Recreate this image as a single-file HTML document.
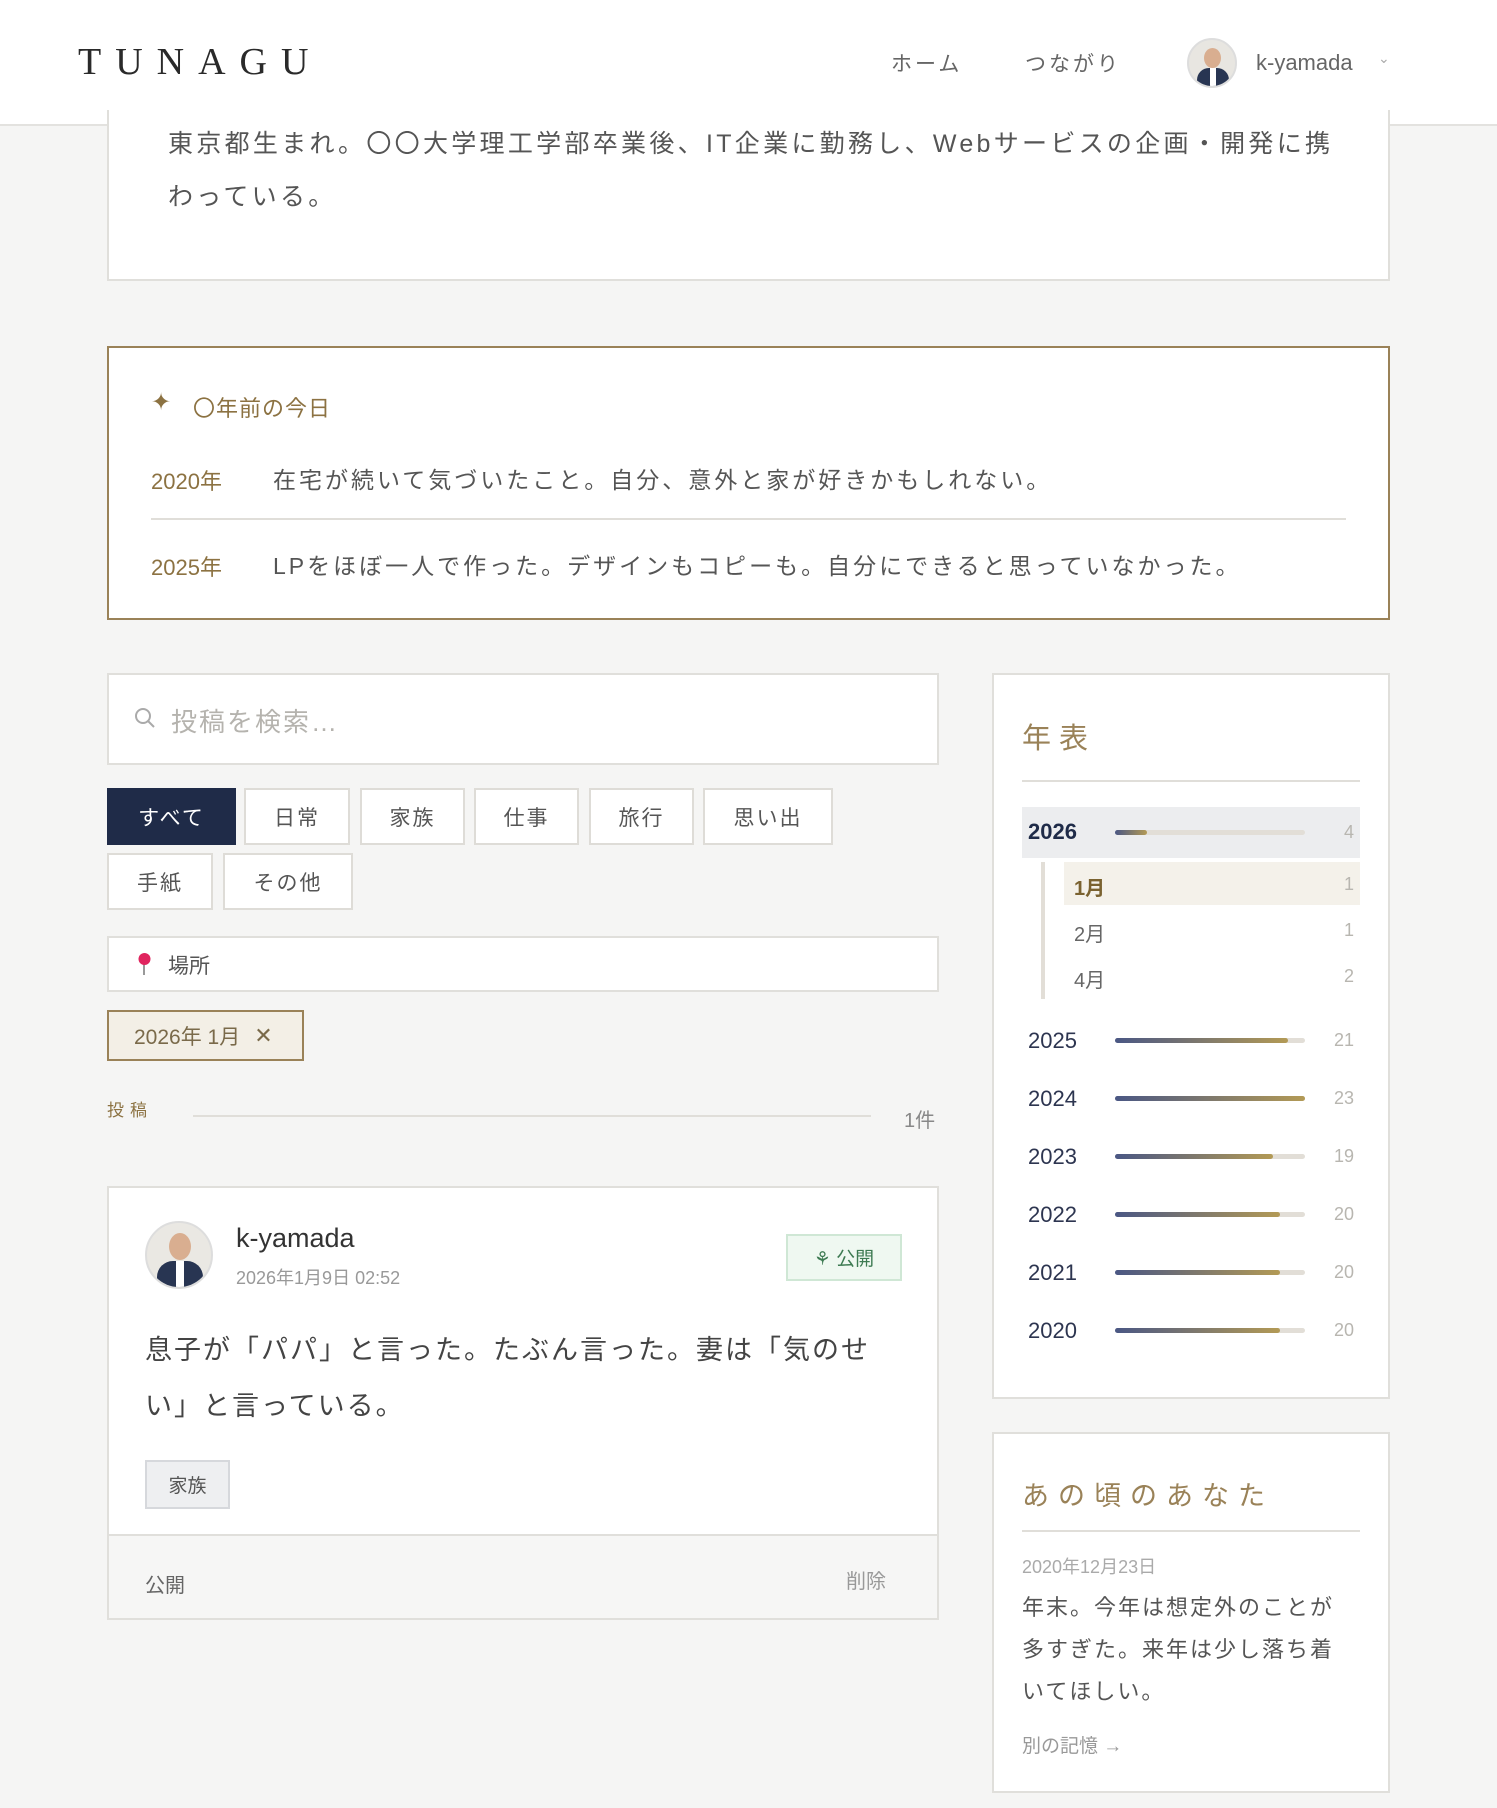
<!DOCTYPE html>
<html><head><meta charset="utf-8"><style>
*{box-sizing:border-box;margin:0;padding:0}
body{width:1497px;height:1808px;background:#f5f5f4;font-family:"Liberation Sans","Noto Sans CJK JP",sans-serif;color:#4a4a4a;position:relative;overflow:hidden}
.a{position:absolute}
.card{position:absolute;background:#fff;border:2px solid #e0dfdb}
.btn{position:absolute;background:#fff;border:2px solid #dedcd7;font-size:21px;color:#555;display:flex;align-items:center;justify-content:center;letter-spacing:2px}
.yr{position:absolute;left:1028px;font-size:22px;color:#2d3550}
.bar{position:absolute;left:1115px;width:190px;height:5px;background:#e2ded7;border-radius:3px}
.bar i{display:block;height:5px;border-radius:3px;background:linear-gradient(90deg,#4a5784,#b39a55)}
.cnt{position:absolute;left:1334px;width:20px;text-align:right;font-size:18px;color:#b8b6b0}
</style></head><body>
<div class="a" style="left:0;top:0;width:1497px;height:126px;background:#fff;border-bottom:2px solid #e3e2df"></div>
<div class="a" style="left:78px;top:40px;font-family:'Liberation Serif',serif;font-size:38px;letter-spacing:14px;color:#2a2a2a">TUNAGU</div>
<div class="a" style="left:891px;top:48px;font-size:21px;color:#666;letter-spacing:3px">ホーム</div>
<div class="a" style="left:1025px;top:48px;font-size:21px;color:#666;letter-spacing:3px">つながり</div>
<div class="a" style="left:1187px;top:38px;width:50px;height:50px;border-radius:50%;background:#e8e6e1;border:2px solid #ddd;overflow:hidden">
<div class="a" style="left:15px;top:8px;width:17px;height:20px;border-radius:50%;background:#d9ae90"></div>
<div class="a" style="left:8px;top:28px;width:32px;height:22px;border-radius:12px 12px 0 0;background:#283552"></div>
<div class="a" style="left:21px;top:28px;width:6px;height:18px;background:#fff"></div></div>
<div class="a" style="left:1256px;top:50px;font-size:22px;color:#666">k-yamada</div>
<div class="a" style="left:1378px;top:50px;font-size:14px;color:#aaa">&#8964;</div>

<div class="card" style="left:107px;top:110px;width:1283px;height:171px;border-top:none"></div>
<div class="a" style="left:168px;top:118px;width:1215px;font-size:25px;line-height:53px;letter-spacing:3.3px;color:#555;white-space:nowrap">東京都生まれ。〇〇大学理工学部卒業後、IT企業に勤務し、Webサービスの企画・開発に携<br>わっている。</div>

<div class="a" style="left:107px;top:346px;width:1283px;height:274px;background:#fff;border:2px solid #9a8258"></div>
<div class="a" style="left:151px;top:388px;font-size:24px;color:#8c7242">✦</div>
<div class="a" style="left:193px;top:391px;font-size:22px;color:#8c7242;letter-spacing:1px">〇年前の今日</div>
<div class="a" style="left:151px;top:464px;font-size:22px;color:#8c7242">2020年</div>
<div class="a" style="left:273px;top:461px;font-size:23px;letter-spacing:3px;color:#555">在宅が続いて気づいたこと。自分、意外と家が好きかもしれない。</div>
<div class="a" style="left:151px;top:518px;width:1195px;height:2px;background:#e0ded9"></div>
<div class="a" style="left:151px;top:550px;font-size:22px;color:#8c7242">2025年</div>
<div class="a" style="left:273px;top:547px;font-size:23px;letter-spacing:3px;color:#555">LPをほぼ一人で作った。デザインもコピーも。自分にできると思っていなかった。</div>

<div class="card" style="left:107px;top:673px;width:832px;height:92px"></div>
<svg class="a" style="left:133px;top:706px" width="24" height="24" viewBox="0 0 24 24"><circle cx="10" cy="10" r="7" fill="none" stroke="#aaa" stroke-width="2"/><path d="M15 15l6 6" stroke="#aaa" stroke-width="2"/></svg>
<div class="a" style="left:171px;top:702px;font-size:26px;color:#b5b3ae;letter-spacing:2px">投稿を検索…</div>

<div class="btn" style="left:107px;top:788px;width:129px;height:57px;background:#1f2b48;border-color:#1f2b48;color:#fff">すべて</div>
<div class="btn" style="left:244px;top:788px;width:106px;height:57px">日常</div>
<div class="btn" style="left:360px;top:788px;width:105px;height:57px">家族</div>
<div class="btn" style="left:474px;top:788px;width:105px;height:57px">仕事</div>
<div class="btn" style="left:589px;top:788px;width:105px;height:57px">旅行</div>
<div class="btn" style="left:703px;top:788px;width:130px;height:57px">思い出</div>
<div class="btn" style="left:107px;top:853px;width:106px;height:57px">手紙</div>
<div class="btn" style="left:223px;top:853px;width:130px;height:57px">その他</div>

<div class="card" style="left:107px;top:936px;width:832px;height:56px"></div>
<svg class="a" style="left:137px;top:952px" width="16" height="24" viewBox="0 0 16 24"><path d="M7 12v11" stroke="#999" stroke-width="2"/><circle cx="7.5" cy="7" r="6" fill="#e0245e"/></svg>
<div class="a" style="left:168px;top:950px;font-size:21px;color:#555">場所</div>

<div class="a" style="left:107px;top:1010px;width:197px;height:51px;background:#f3efe6;border:2px solid #9a8258;font-size:21px;color:#7a6a4a;display:flex;align-items:center;padding-left:25px">2026年 1月 <span style="margin-left:14px;font-size:22px">✕</span></div>

<div class="a" style="left:107px;top:1096px;font-size:17px;color:#8c7242;letter-spacing:6px">投稿</div>
<div class="a" style="left:193px;top:1115px;width:678px;height:2px;background:#e0ded9"></div>
<div class="a" style="left:904px;top:1104px;font-size:20px;color:#888">1件</div>

<div class="card" style="left:107px;top:1186px;width:832px;height:434px"></div>
<div class="a" style="left:109px;top:1534px;width:828px;height:84px;background:#f6f6f5;border-top:2px solid #e0dfdb"></div>
<div class="a" style="left:145px;top:1221px;width:68px;height:68px;border-radius:50%;background:#eae8e3;border:2px solid #ddd;overflow:hidden">
<div class="a" style="left:22px;top:10px;width:22px;height:27px;border-radius:50%;background:#d9ae90"></div>
<div class="a" style="left:10px;top:38px;width:46px;height:30px;border-radius:16px 16px 0 0;background:#283552"></div>
<div class="a" style="left:29px;top:38px;width:8px;height:26px;background:#fff"></div></div>
<div class="a" style="left:236px;top:1223px;font-size:27px;color:#333">k-yamada</div>
<div class="a" style="left:236px;top:1264px;font-size:18px;color:#999">2026年1月9日 02:52</div>
<div class="a" style="left:786px;top:1234px;width:116px;height:47px;background:#eff8f1;border:2px solid #cfe7d5;color:#3d7a52;font-size:19px;display:flex;align-items:center;justify-content:center">⚘ 公開</div>
<div class="a" style="left:145px;top:1322px;width:740px;font-size:27px;line-height:56px;letter-spacing:2px;color:#444">息子が「パパ」と言った。たぶん言った。妻は「気のせい」と言っている。</div>
<div class="a" style="left:145px;top:1460px;width:85px;height:49px;background:#eeeff1;border:2px solid #d6d8dc;font-size:19px;color:#555;display:flex;align-items:center;justify-content:center">家族</div>
<div class="a" style="left:145px;top:1569px;font-size:20px;color:#666">公開</div>
<div class="a" style="left:846px;top:1565px;font-size:20px;color:#999">削除</div>

<div class="card" style="left:992px;top:673px;width:398px;height:726px"></div>
<div class="a" style="left:1022px;top:715px;font-size:29px;color:#9a8258;letter-spacing:8px">年表</div>
<div class="a" style="left:1022px;top:780px;width:338px;height:2px;background:#e0ded9"></div>
<div class="a" style="left:1022px;top:807px;width:338px;height:51px;background:#ecedef"></div>
<div class="yr" style="top:819px;font-weight:bold;color:#1f2b48">2026</div>
<div class="bar" style="top:830px"><i style="width:17%"></i></div>
<div class="cnt" style="top:822px">4</div>
<div class="a" style="left:1041px;top:862px;width:4px;height:137px;background:#e2ded7"></div>
<div class="a" style="left:1064px;top:862px;width:296px;height:43px;background:#f4f1ea"></div>
<div class="a" style="left:1074px;top:872px;font-size:20px;color:#7a6230;font-weight:bold">1月</div>
<div class="cnt" style="top:874px">1</div>
<div class="a" style="left:1074px;top:918px;font-size:20px;color:#666">2月</div>
<div class="cnt" style="top:920px">1</div>
<div class="a" style="left:1074px;top:964px;font-size:20px;color:#666">4月</div>
<div class="cnt" style="top:966px">2</div>
<div class="yr" style="top:1028px">2025</div><div class="bar" style="top:1038px"><i style="width:91%"></i></div><div class="cnt" style="top:1030px">21</div>
<div class="yr" style="top:1086px">2024</div><div class="bar" style="top:1096px"><i style="width:100%"></i></div><div class="cnt" style="top:1088px">23</div>
<div class="yr" style="top:1144px">2023</div><div class="bar" style="top:1154px"><i style="width:83%"></i></div><div class="cnt" style="top:1146px">19</div>
<div class="yr" style="top:1202px">2022</div><div class="bar" style="top:1212px"><i style="width:87%"></i></div><div class="cnt" style="top:1204px">20</div>
<div class="yr" style="top:1260px">2021</div><div class="bar" style="top:1270px"><i style="width:87%"></i></div><div class="cnt" style="top:1262px">20</div>
<div class="yr" style="top:1318px">2020</div><div class="bar" style="top:1328px"><i style="width:87%"></i></div><div class="cnt" style="top:1320px">20</div>

<div class="card" style="left:992px;top:1432px;width:398px;height:361px"></div>
<div class="a" style="left:1022px;top:1474px;font-size:27px;color:#9a8258;letter-spacing:9px">あの頃のあなた</div>
<div class="a" style="left:1022px;top:1530px;width:338px;height:2px;background:#e0ded9"></div>
<div class="a" style="left:1022px;top:1553px;font-size:18px;color:#aaa">2020年12月23日</div>
<div class="a" style="left:1022px;top:1587px;width:330px;font-size:22px;line-height:42px;letter-spacing:2px;color:#555">年末。今年は想定外のことが多すぎた。来年は少し落ち着いてほしい。</div>
<div class="a" style="left:1022px;top:1731px;font-size:19px;color:#999">別の記憶 →</div>
</body></html>
